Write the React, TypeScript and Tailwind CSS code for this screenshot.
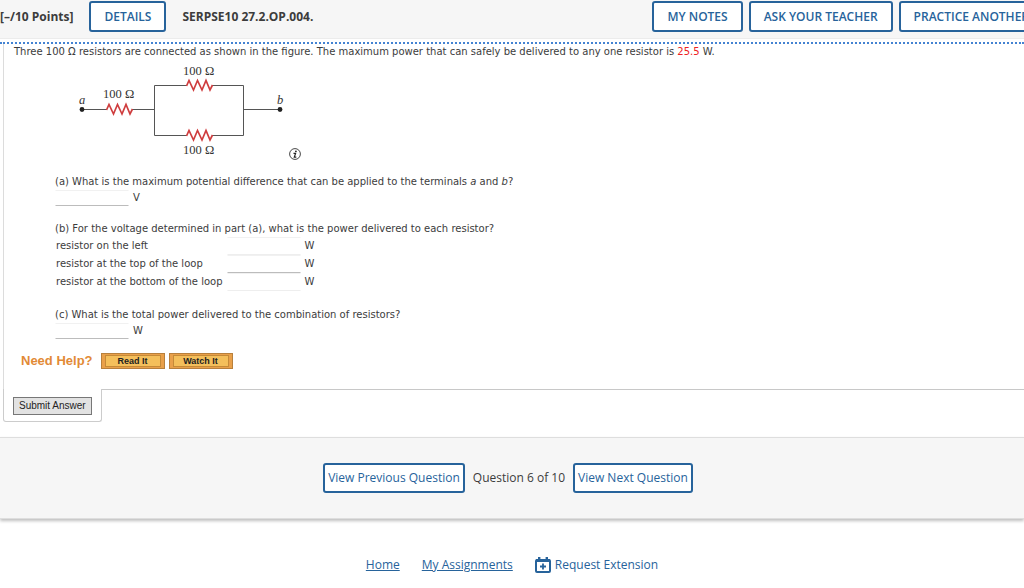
import type { ReactNode } from "react"

const headerButton =
  "h-[31px] shrink-0 rounded-[3px] border-2 border-[#27639b] bg-white px-[13px] text-xs font-semibold text-[#27639b] whitespace-nowrap"

const navButton =
  "h-[30px] rounded-[3px] border-2 border-[#27639b] bg-white px-[3px] text-xs text-[#27639b] whitespace-nowrap"

const helpButton =
  "h-4 w-16 border border-[#b8803c] bg-[#e9a04a] px-[3px] py-px font-['Liberation_Sans',sans-serif] text-[9px] leading-[10px] font-bold text-[#222]"

function AnswerInput({ label, active }: { label: string; active?: boolean }) {
  return (
    <input
      type="text"
      aria-label={label}
      className={`block h-full w-[74px] border border-x-transparent border-t-[#f1f1f1] bg-white px-1 outline-none ${
        active ? "border-b-[#bcbcbc]" : "border-b-[#eeeeee]"
      }`}
    />
  )
}

function Answer({ label, unit }: { label: string; unit: string }) {
  return (
    <div className="flex h-4 gap-1 leading-[15px]">
      <AnswerInput label={label} active />
      <span>{unit}</span>
    </div>
  )
}

function Question({ children }: { children: ReactNode }) {
  return <p className="leading-4">{children}</p>
}

function Circuit() {
  return (
    <svg width="232" height="102" viewBox="0 0 232 102" role="img" aria-label="Resistor circuit between a and b">
      <path
        d="M27 49.5H52M77 49.5H99.5M99.5 25.5V75.5M99.5 25.5H132M157 25.5H188.5V75.5H157M132 75.5H99.5M188.5 49.5H225"
        fill="none"
        stroke="#555"
      />
      <g fill="none" stroke="#cf3d3e" strokeWidth="1.7">
        <path d="M51.5 50L54 44.5L58.5 54L62.5 44.5L67 54L71 44.5L75 54L77.5 49" />
        <path d="M131.5 26L134 20.5L138.5 30L142.5 20.5L147 30L151 20.5L155 30L157.5 25" />
        <path d="M131.5 76L134 70.5L138.5 80L142.5 70.5L147 80L151 70.5L155 80L157.5 75" />
      </g>
      <circle cx="27" cy="49.5" r="2.4" fill="#222" />
      <circle cx="225" cy="49.5" r="2.4" fill="#222" />
      <g fill="#333" fontFamily="Liberation Serif, serif" fontSize="12.5">
        <text x="48" y="38">100 Ω</text>
        <text x="128" y="15">100 Ω</text>
        <text x="128" y="94">100 Ω</text>
        <text x="24" y="44" fontStyle="italic">a</text>
        <text x="222" y="44" fontStyle="italic">b</text>
      </g>
    </svg>
  )
}

function InfoIcon() {
  return (
    <svg width="12" height="12" viewBox="0 0 12 12" aria-hidden="true">
      <circle cx="6" cy="6" r="5.4" fill="#fff" stroke="#333" strokeWidth="0.9" />
      <circle cx="6.9" cy="3.3" r="0.9" fill="#222" />
      <path d="M4.5 5.4H6.6L5.3 9.1H7.3" fill="none" stroke="#222" strokeWidth="1.2" />
    </svg>
  )
}

function CalendarIcon() {
  return (
    <svg width="16" height="16" viewBox="0 0 16 16" aria-hidden="true">
      <rect x="1" y="3" width="14" height="12" rx="1" fill="none" stroke="#27639b" strokeWidth="2" />
      <path d="M1 2h14v3H1zM3 0h2.4v3H3zM10.6 0H13v3h-2.400z" fill="#27639b" />
      <path d="M8 6.5v6M5 9.500h6" stroke="#27639b" strokeWidth="1.8" />
    </svg>
  )
}

const resistors = [
  { name: "resistor on the left", active: false },
  { name: "resistor at the top of the loop", active: true },
  { name: "resistor at the bottom of the loop", active: false },
]

export default function App() {
  return (
    <div className="overflow-x-hidden bg-white font-['Open_Sans',sans-serif] text-[#3c3c3c]">
      <header className="flex items-center border-b border-[#ececec] bg-[#f6f6f6] pt-px pb-[6px] text-xs font-bold whitespace-nowrap">
        <span className="mr-4">[–/10 Points]</span>
        <button className={headerButton}>DETAILS</button>
        <h1 className="ml-4">SERPSE10 27.2.OP.004.</h1>
        <div className="-mr-5 ml-auto flex shrink-0 gap-[6px]">
          <button className={headerButton}>MY NOTES</button>
          <button className={headerButton}>ASK YOUR TEACHER</button>
          <button className={headerButton}>PRACTICE ANOTHER</button>
        </div>
      </header>

      <main className="pt-[3px] font-['DejaVu_Sans',sans-serif] text-[10px]">
        <div className="border-t-2 border-dotted border-[#4483d2]" />
        <div className="ml-[3px] border-l border-[#dcdcdc] pb-5">
          <p className="pl-[10px] leading-4">
            Three 100 Ω resistors are connected as shown in the figure. The maximum power that can safely be delivered to
            any one resistor is <span className="text-[#ee2222]">25.5</span> W.
          </p>
          <div className="pl-[51px]">
            <div className="flex items-end gap-[2px]">
              <Circuit />
              <button aria-label="Figure information" className="pb-[2px]">
                <InfoIcon />
              </button>
            </div>

            <div className="pt-3">
              <Question>
                (a) What is the maximum potential difference that can be applied to the terminals <i>a</i> and <i>b</i>?
              </Question>
              <Answer label="Maximum potential difference" unit="V" />
            </div>

            <div className="pt-[15px]">
              <Question>
                (b) For the voltage determined in part (a), what is the power delivered to each resistor?
              </Question>
              <table className="border-collapse">
                <tbody>
                  {resistors.map((r) => (
                    <tr key={r.name} className="leading-[18px]">
                      <td className="py-0 pr-1 pl-px">{r.name}</td>
                      <td className="h-[18px] p-0">
                        <AnswerInput label={r.name} active={r.active} />
                      </td>
                      <td className="py-0 pl-1">W</td>
                    </tr>
                  ))}
                </tbody>
              </table>
            </div>

            <div className="pt-4">
              <Question>(c) What is the total power delivered to the combination of resistors?</Question>
              <Answer label="Total power" unit="W" />
            </div>
          </div>

          <div className="flex items-center gap-1 pt-[14px] pl-[17px]">
            <span className="mr-1 font-['Liberation_Sans',sans-serif] text-[13px] leading-4 font-bold text-[#e28a36]">
              Need Help?
            </span>
            <button className={helpButton}>
              <span className="block border border-[#c58a38] bg-[#f4bf5b]">Read It</span>
            </button>
            <button className={helpButton}>
              <span className="block border border-[#c58a38] bg-[#f4bf5b]">Watch It</span>
            </button>
          </div>
        </div>

        <div className="ml-[3px] flex">
          <div className="rounded-b-[3px] border border-t-0 border-[#cccccc] px-[9px] pt-2 pb-[6px]">
            <button className="block h-[18px] border border-[#777] bg-[#e2e2e2] px-[5px] font-['Liberation_Sans',sans-serif] text-[10px] leading-4 whitespace-nowrap text-[#222]">
              Submit Answer
            </button>
          </div>
          <div className="flex-1 border-t border-[#c8c8c8]" />
        </div>
      </main>

      <nav className="mt-[15px] flex items-center justify-center gap-2 border-y border-[#dedede] bg-[#f6f6f6] py-[25px] pr-2 text-xs shadow-[0_2px_3px_rgba(0,0,0,0.25)]">
        <button className={navButton}>View Previous Question</button>
        <span>Question 6 of 10</span>
        <button className={navButton}>View Next Question</button>
      </nav>

      <footer className="flex items-center justify-center gap-[22px] pt-9 pb-3 text-xs leading-5 text-[#27639b]">
        <a href="#home" className="underline">Home</a>
        <a href="#assignments" className="underline">My Assignments</a>
        <a href="#extension" className="flex items-center gap-1">
          <CalendarIcon />
          Request Extension
        </a>
      </footer>
    </div>
  )
}
